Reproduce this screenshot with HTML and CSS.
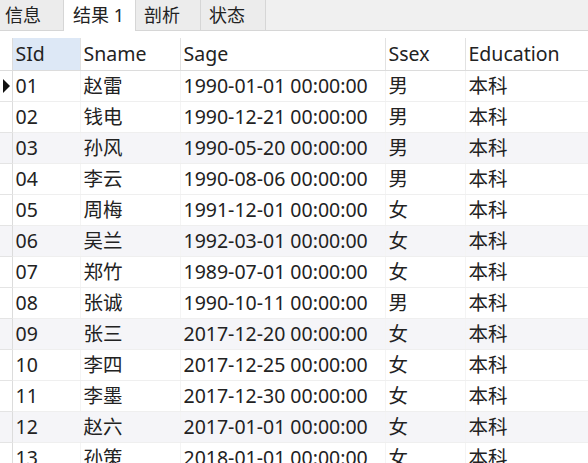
FILE: index.html
```html
<!DOCTYPE html>
<html>
	<head>
		<meta charset="utf-8">
		<title>结果 1</title>
		<link rel="stylesheet" href="styles.css">
	</head>
	<body>
		<div class="tabs">
			<div class="tab">信息</div>
			<div class="tab active">结果 1</div>
			<div class="tab">剖析</div>
			<div class="tab">状态</div>
		</div>

		<table class="grid">
			<colgroup>
				<col class="c-mark">
				<col class="c-sid">
				<col class="c-sname">
				<col class="c-sage">
				<col class="c-ssex">
				<col>
			</colgroup>
			<thead>
				<tr>
					<th class="mark"></th>
					<th class="sel">SId</th>
					<th>Sname</th>
					<th>Sage</th>
					<th>Ssex</th>
					<th>Education</th>
				</tr>
			</thead>
			<tbody>
				<tr><td class="mark"><span class="arrow"></span></td><td>01</td><td>赵雷</td><td>1990-01-01 00:00:00</td><td>男</td><td>本科</td></tr>
				<tr><td class="mark"></td><td>02</td><td>钱电</td><td>1990-12-21 00:00:00</td><td>男</td><td>本科</td></tr>
				<tr class="alt"><td class="mark"></td><td>03</td><td>孙风</td><td>1990-05-20 00:00:00</td><td>男</td><td>本科</td></tr>
				<tr><td class="mark"></td><td>04</td><td>李云</td><td>1990-08-06 00:00:00</td><td>男</td><td>本科</td></tr>
				<tr><td class="mark"></td><td>05</td><td>周梅</td><td>1991-12-01 00:00:00</td><td>女</td><td>本科</td></tr>
				<tr class="alt"><td class="mark"></td><td>06</td><td>吴兰</td><td>1992-03-01 00:00:00</td><td>女</td><td>本科</td></tr>
				<tr><td class="mark"></td><td>07</td><td>郑竹</td><td>1989-07-01 00:00:00</td><td>女</td><td>本科</td></tr>
				<tr><td class="mark"></td><td>08</td><td>张诚</td><td>1990-10-11 00:00:00</td><td>男</td><td>本科</td></tr>
				<tr class="alt"><td class="mark"></td><td>09</td><td>张三</td><td>2017-12-20 00:00:00</td><td>女</td><td>本科</td></tr>
				<tr><td class="mark"></td><td>10</td><td>李四</td><td>2017-12-25 00:00:00</td><td>女</td><td>本科</td></tr>
				<tr><td class="mark"></td><td>11</td><td>李墨</td><td>2017-12-30 00:00:00</td><td>女</td><td>本科</td></tr>
				<tr class="alt"><td class="mark"></td><td>12</td><td>赵六</td><td>2017-01-01 00:00:00</td><td>女</td><td>本科</td></tr>
				<tr><td class="mark"></td><td>13</td><td>孙策</td><td>2018-01-01 00:00:00</td><td>女</td><td>本科</td></tr>
			</tbody>
		</table>
	</body>
</html>
```

FILE: styles.css
```css
*{
	box-sizing: border-box;
}
html, body{
	margin: 0;
	background: #fff;
	overflow: hidden;
}
body{
	font-family: "Noto Sans", "Noto Sans CJK SC", sans-serif;
	color: #222;
	width: 588px;
	height: 463px;
}
.tabs{
	display: flex;
	height: 31px;
	background: #f0f0f0;
	border-bottom: 1px solid #d6d6d6;
	padding-right: 320px;
}
.tab{
	width: 65px;
	height: 30px;
	line-height: 30px;
	font-size: 18px;
	padding-left: 8px;
	background: #ececec;
	border-right: 1px solid #d6d6d6;
}
.tab:first-child{
	width: 64px;
	padding-left: 5px;
}
.tab.active{
	width: 72px;
	height: 31px;
	padding-left: 9px;
	background: #fff;
}
.grid{
	margin-top: 7px;
	width: 588px;
	border-collapse: collapse;
	table-layout: fixed;
	font-size: 19.5px;
}
.c-mark{ width: 12px; }
.c-sid{ width: 68px; }
.c-sname{ width: 100px; }
.c-sage{ width: 205px; }
.c-ssex{ width: 80px; }
th, td{
	height: 31px;
	padding: 0 0 0 3px;
	text-align: left;
	font-weight: 400;
	white-space: nowrap;
	overflow: hidden;
	line-height: 30px;
}
th{
	height: 32px;
	border-bottom: 1px solid #dcdcdc;
	border-left: 1px solid #e2e2e2;
}
th.mark{
	border-left: none;
}
th.sel{
	background: #dde8f6;
	border-left: none;
}
td{
	border-bottom: 1px solid #efefef;
	border-left: 1px solid #f4f4f4;
}
td.mark, th.mark{
	padding: 0;
	border-right: 1px solid #dcdcdc;
}
td.mark{
	border-left: none;
	border-bottom-color: #e4e4e4;
}
tr.alt td{
	background: #f5f5f8;
}
.arrow{
	display: block;
	margin-left: 3px;
	width: 0;
	height: 0;
	border-top: 7px solid transparent;
	border-bottom: 7px solid transparent;
	border-left: 7px solid #111;
}
```
